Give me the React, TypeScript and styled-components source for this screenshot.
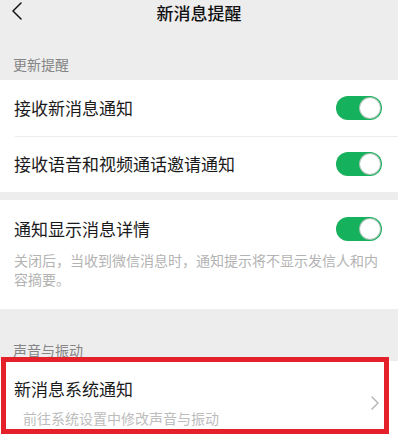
import styled, { createGlobalStyle } from "styled-components";

const GlobalStyle = createGlobalStyle`
  html, body {
    margin: 0;
    padding: 0;
    background: #ffffff;
  }
  body {
    font-family: "Noto Sans CJK SC", "Noto Sans", sans-serif;
    -webkit-font-smoothing: antialiased;
  }
`;

const Page = styled.div`
  width: 398px;
  height: 442px;
  background: #ededed;
  overflow: hidden;
  position: relative;
`;

const NavBar = styled.div`
  height: 26px;
  display: flex;
  align-items: center;
  justify-content: center;
  position: relative;
`;

const BackButton = styled.div`
  position: absolute;
  left: 12px;
  top: 2px;
  width: 12px;
  height: 18px;
  display: flex;
`;

const Title = styled.div`
  font-size: 17px;
  font-weight: 500;
  color: #111;
  line-height: 26px;
`;

const SectionLabel = styled.div<{ $top: number; $bottom: number }>`
  padding: ${(p) => p.$top}px 14px ${(p) => p.$bottom}px 13px;
  font-size: 14px;
  line-height: 20px;
  color: #858585;
`;

const Group = styled.div`
  background: #fff;
`;

const Spacer = styled.div`
  height: 8px;
`;

const Row = styled.div<{ $divider?: boolean }>`
  height: 56px;
  display: flex;
  align-items: center;
  justify-content: space-between;
  padding: 0 15px 0 14px;
  position: relative;
  ${(p) =>
    p.$divider &&
    `
    &::before {
      content: "";
      position: absolute;
      left: 15px;
      right: 0;
      top: 0;
      height: 1px;
      background: #ececec;
    }
  `}
`;

const RowText = styled.div`
  font-size: 17px;
  color: #1a1a1a;
  line-height: 24px;
`;

const DetailBlock = styled.div`
  padding: 17px 18px 21px 14px;
`;

const DetailHead = styled.div`
  display: flex;
  align-items: center;
  justify-content: space-between;
`;

const Desc = styled.div`
  margin-top: 10px;
  font-size: 14px;
  line-height: 18.5px;
  color: #b3b3b3;
`;

const LinkBlock = styled.div`
  padding: 16px 19px 14px 14px;
  display: flex;
  align-items: center;
  justify-content: space-between;
`;

const LinkText = styled.div`
  display: flex;
  flex-direction: column;
`;

const SubText = styled.div`
  margin-top: 7px;
  padding-left: 9px;
  font-size: 14px;
  line-height: 20px;
  color: #bdbdbd;
`;

const Switch = styled.div<{ $shift?: number }>`
  width: 46px;
  height: 24px;
  border-radius: 12px;
  background: #16b15d;
  position: relative;
  flex-shrink: 0;
  margin-right: ${(p) => p.$shift ?? 1}px;
  &::after {
    content: "";
    position: absolute;
    right: 1px;
    top: 1px;
    width: 22px;
    height: 22px;
    border-radius: 50%;
    background: #fff;
    box-sizing: border-box;
    border: 1px solid rgba(0, 80, 40, 0.35);
  }
`;

// red annotation frame drawn over the last setting
const Highlight = styled.div`
  position: absolute;
  left: 1px;
  top: 357px;
  width: 388px;
  height: 77px;
  border: 5px solid #e4202b;
  box-sizing: border-box;
  pointer-events: none;
`;

type ChevronProps = {
  dir: "left" | "right";
  color: string;
  w: number;
  h: number;
  sw: number;
};

const Chevron = ({ dir, color, w, h, sw }: ChevronProps) => (
  <svg width={w} height={h} viewBox={`0 0 ${w} ${h}`} fill="none">
    <polyline
      points={
        dir === "left"
          ? `${w - 1},1 1,${h / 2} ${w - 1},${h - 1}`
          : `1,1 ${w - 1},${h / 2} 1,${h - 1}`
      }
      stroke={color}
      strokeWidth={sw}
      strokeLinecap="round"
      strokeLinejoin="round"
    />
  </svg>
);

export default function App() {
  return (
    <>
      <GlobalStyle />
      <Page>
        <NavBar>
          <BackButton>
            <Chevron dir="left" color="#111" w={10} h={18} sw={1.5} />
          </BackButton>
          <Title>新消息提醒</Title>
        </NavBar>

        <SectionLabel $top={28} $bottom={6}>更新提醒</SectionLabel>
        <Group>
          <Row>
            <RowText>接收新消息通知</RowText>
            <Switch />
          </Row>
          <Row $divider>
            <RowText>接收语音和视频通话邀请通知</RowText>
            <Switch />
          </Row>
        </Group>

        <Spacer />
        <Group>
          <DetailBlock>
            <DetailHead>
              <RowText>通知显示消息详情</RowText>
              <Switch $shift={-2} />
            </DetailHead>
            <Desc>关闭后，当收到微信消息时，通知提示将不显示发信人和内容摘要。</Desc>
          </DetailBlock>
        </Group>

        <SectionLabel $top={31} $bottom={1}>声音与振动</SectionLabel>
        <Group>
          <LinkBlock>
            <LinkText>
              <RowText>新消息系统通知</RowText>
              <SubText>前往系统设置中修改声音与振动</SubText>
            </LinkText>
            <Chevron dir="right" color="#b2b2b2" w={8} h={14} sw={1.4} />
          </LinkBlock>
        </Group>

        <Highlight />
      </Page>
    </>
  );
}
